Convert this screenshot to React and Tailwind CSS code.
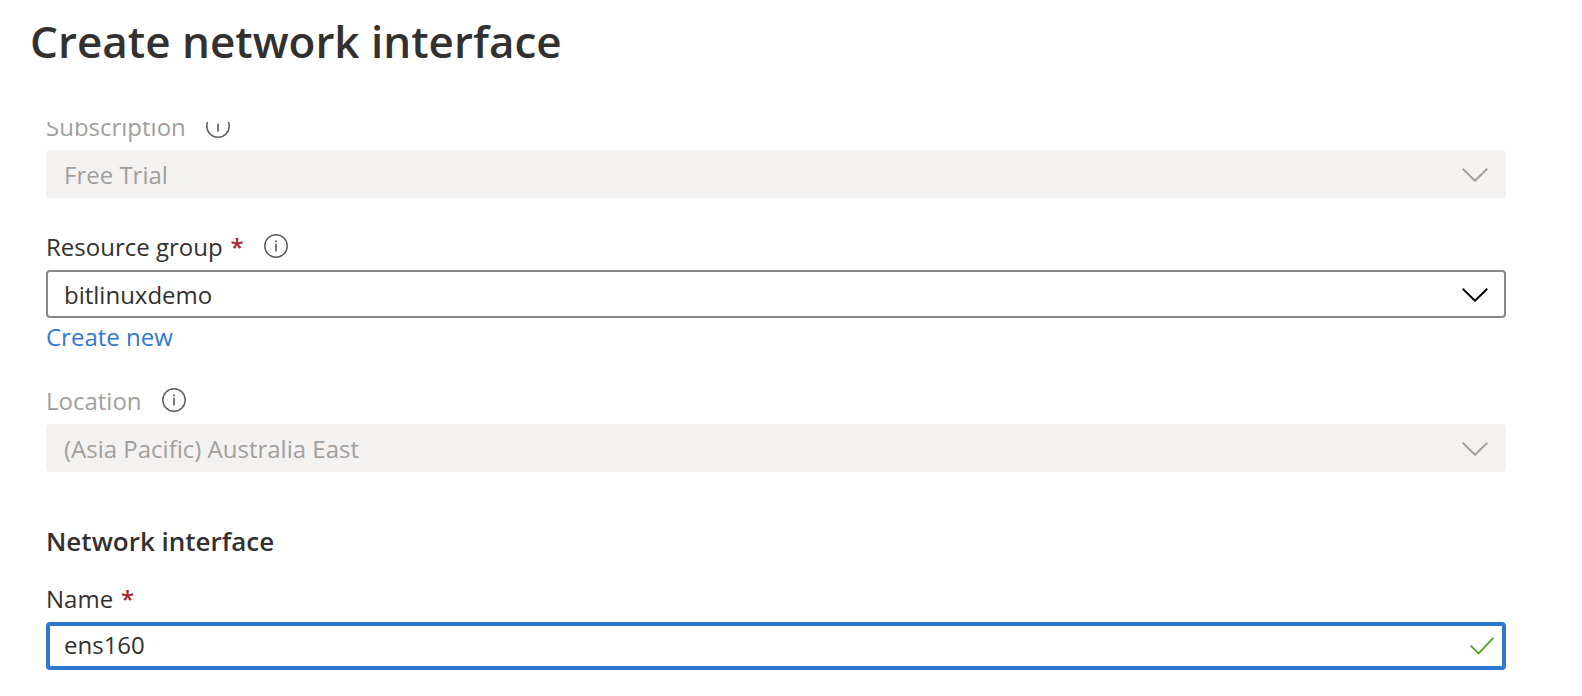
import React from "react";

function InfoIcon() {
  return (
    <svg viewBox="0 0 24 24" className="size-6" fill="none" stroke="#605e5c" aria-hidden="true">
      <circle cx="12" cy="12" r="11.2" strokeWidth="1.5" />
      <path d="M12 9.8V17.4" strokeWidth="1.7" />
      <path d="M12 6.6V8.3" strokeWidth="1.8" />
    </svg>
  );
}

function ChevronIcon({ className }) {
  return (
    <svg
      viewBox="0 0 26 14"
      className={`pointer-events-none col-start-1 row-start-1 mt-0.5 mr-[18px] h-[14px] w-[26px] self-center justify-self-end ${className}`}
      fill="none"
      stroke="currentColor"
      strokeWidth="1.9"
      aria-hidden="true"
    >
      <path d="M0.7 0.7L13 12.8L25.3 0.7" />
    </svg>
  );
}

function FieldLabel({ id, text, required, info, muted }) {
  return (
    <div className="flex h-[46px] items-center">
      <label htmlFor={id} className={muted ? "text-[#a19f9d]" : "text-[#323130]"}>
        {text}
        {required && <span className="ml-2 font-semibold text-[#a4262c]">*</span>}
      </label>
      {info && (
        <button type="button" aria-label={`About ${text}`} className="mb-0.5 ml-5">
          <InfoIcon />
        </button>
      )}
    </div>
  );
}

function SelectField({ id, text, value, required, disabled }) {
  return (
    <div>
      <FieldLabel id={id} text={text} required={required} muted={disabled} info />
      <div className="grid">
        <select
          id={id}
          disabled={disabled}
          defaultValue={value}
          className={`col-start-1 row-start-1 h-12 w-full appearance-none rounded border-2 px-4 pt-0.5 opacity-100 outline-none ${
            disabled
              ? "border-[#f3f2f1] bg-[#f3f2f1] text-[#a19f9d]"
              : "border-[#8a8886] bg-white text-[#323130]"
          }`}
        >
          <option>{value}</option>
        </select>
        <ChevronIcon className={disabled ? "text-[#a19f9d]" : "text-black"} />
      </div>
    </div>
  );
}

export default function App() {
  return (
    <div className="bg-white font-['Open_Sans','Noto_Sans',sans-serif] text-2xl text-[#323130]">
      <header className="h-[122px] px-[30px] pt-3">
        <h1 className="text-[44px] leading-[58px] font-semibold">Create network interface</h1>
      </header>
      <main className="overflow-hidden pr-[76px] pb-[26px] pl-[46px]">
        <form className="-mt-[18px]" onSubmit={(e) => e.preventDefault()}>
          <SelectField id="subscription" text="Subscription" value="Free Trial" disabled />
          <div className="mt-[26px]">
            <SelectField id="resource-group" text="Resource group" value="bitlinuxdemo" required />
          </div>
          <a href="#create" className="block w-fit leading-[38px] text-[#2f78d0]">
            Create new
          </a>
          <div className="mt-[22px]">
            <SelectField id="location" text="Location" value="(Asia Pacific) Australia East" disabled />
          </div>
          <h2 className="mt-[50px] mb-4 text-[26px] leading-[38px] font-semibold">
            Network interface
          </h2>
          <FieldLabel id="name" text="Name" required />
          <div className="grid">
            <input
              id="name"
              type="text"
              defaultValue="ens160"
              className="col-start-1 row-start-1 h-12 w-full rounded border-4 border-[#2f78d0] bg-white px-[14px] pb-1 outline-none"
            />
            <svg
              viewBox="0 0 24 18"
              className="pointer-events-none col-start-1 row-start-1 mr-3 h-[18px] w-6 self-center justify-self-end"
              fill="none"
              stroke="#5c9f26"
              strokeWidth="1.8"
              aria-hidden="true"
            >
              <path d="M0.7 8.6L8.6 16.4L23.3 0.8" />
            </svg>
          </div>
        </form>
      </main>
    </div>
  );
}
